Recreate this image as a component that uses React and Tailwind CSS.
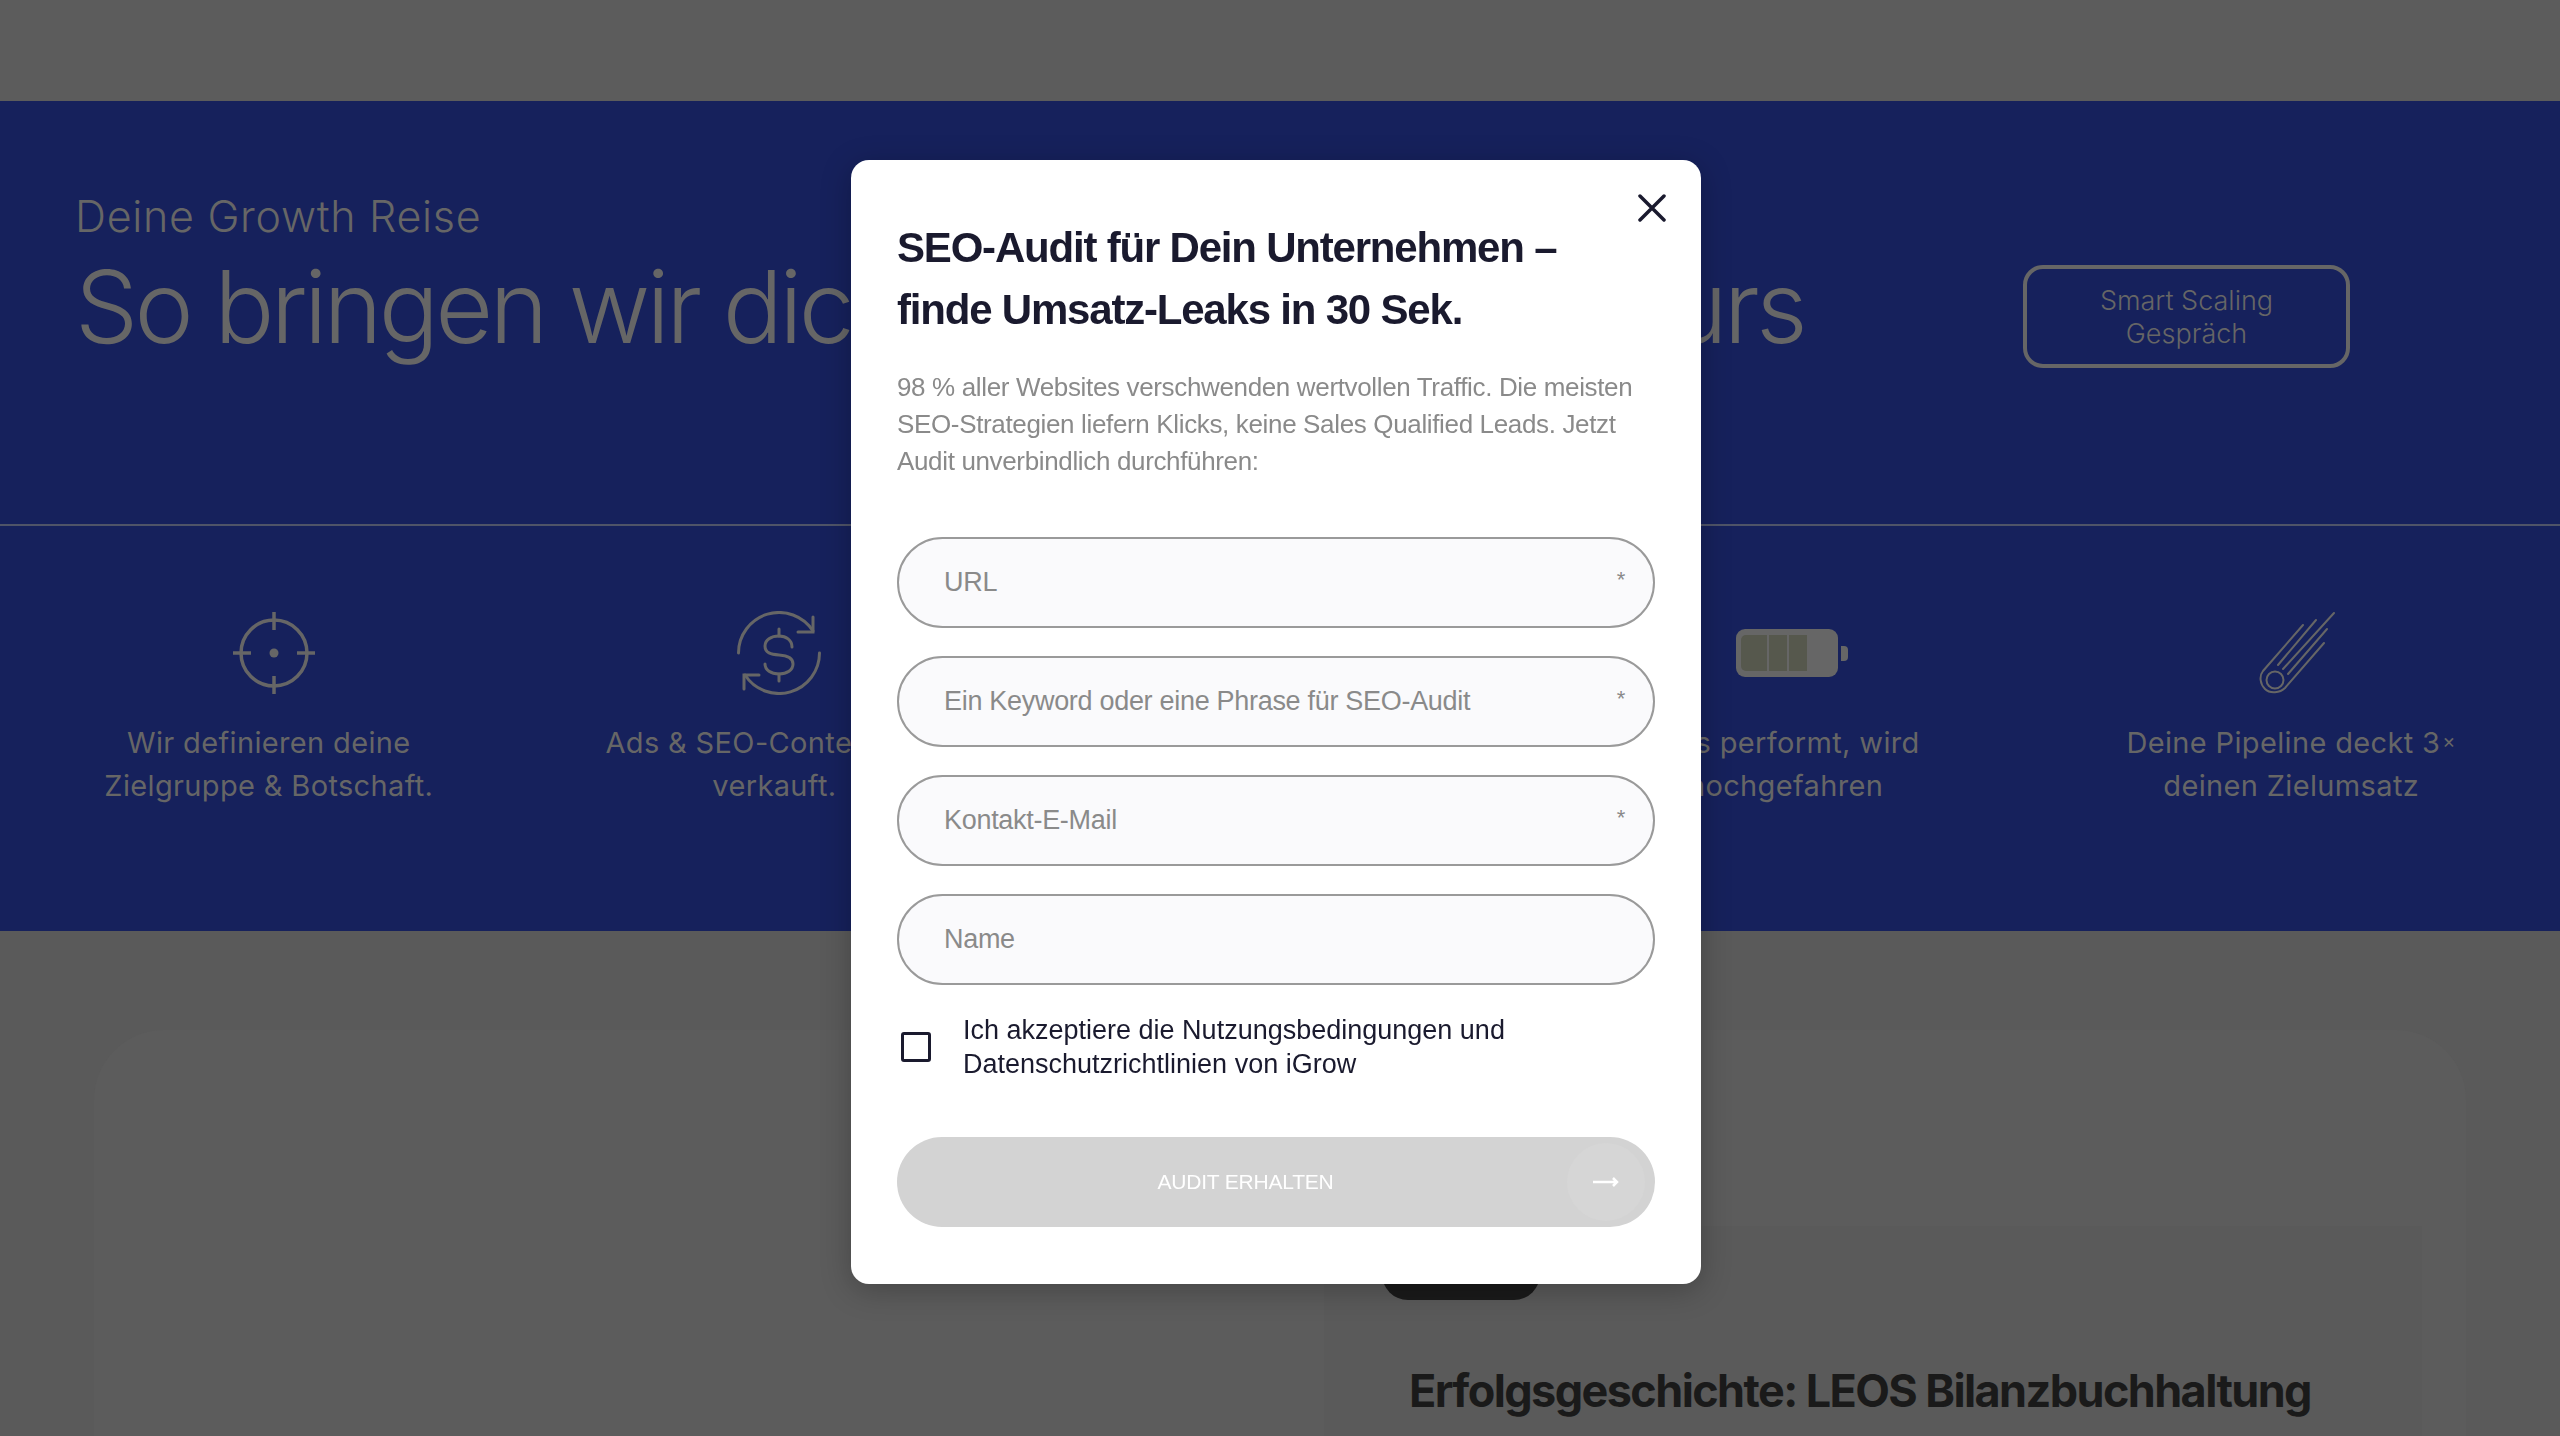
function TargetIcon() {
  return (
    <svg width="84" height="84" viewBox="0 0 84 84" fill="none" stroke="#666" strokeWidth="3.500">
      <circle cx="42" cy="42" r="33" />
      <path d="M42 1V19M42 65V83M1 42H19M65 42H83" />
      <circle cx="42" cy="42" r="4.500" fill="#666" stroke="none" />
    </svg>
  );
}

function DollarIcon() {
  return (
    <svg width="84" height="84" viewBox="0 0 84 84" fill="none" stroke="#666" strokeWidth="3" strokeLinecap="round">
      <path d="M1.500 42A40.500 40.500 0 0 1 76 20" />
      <path d="M76 6V21H61" />
      <path d="M82.500 42A40.500 40.500 0 0 1 8 64" />
      <path d="M7 78V64H22" />
      <path d="M55 36C55 29 49 25 42 25C34 25 28 29 28 35C28 42 34 43.500 42 44C50 44.500 56 47 56 53C56 59 50 63 42 63C34 63 28 59 28 53" />
      <path d="M42 18V25M42 63V70" />
    </svg>
  );
}

function BatteryIcon() {
  return (
    <div className="flex items-center gap-[3px]">
      <div className="flex h-[48px] w-[102px] gap-[2px] rounded-[9px] bg-[#666] py-[6px] pl-[5px] pr-[31px]">
        <div className="w-[26px] rounded-l-[5px] bg-[#56584d]" />
        <div className="w-[18px] bg-[#56584d]" />
        <div className="w-[18px] bg-[#56584d]" />
      </div>
      <div className="h-[15px] w-[7px] rounded-r-[4px] bg-[#666]" />
    </div>
  );
}

function CometIcon() {
  return (
    <svg width="78" height="84" viewBox="0 0 78 84" fill="none" stroke="#666" strokeWidth="2" strokeLinecap="round">
      <circle cx="17" cy="69" r="8.500" />
      <path d="M45 14L5 60C1 65 2 73 7 78C12 83 22 82 27 77L66 32" />
      <path d="M58 9L20 54M76 2L25 58M69 18L30 63" />
    </svg>
  );
}

function Step({ icon, lines, iconShift }) {
  return (
    <div className="flex flex-col items-center text-center">
      <div className={"flex h-[84px] items-center " + iconShift}>{icon}</div>
      <p className="mt-[26px] text-[29px] leading-[43px] tracking-[0.35px] text-[#666]">
        {lines[0]}
        <br />
        {lines[1]}
      </p>
    </div>
  );
}

function Field({ label, required }) {
  return (
    <label className="relative flex h-[91px] items-center rounded-full border-2 border-[#9a9a9a] bg-[#fafafc] pl-[45px] text-[27px] tracking-[-0.3px] text-[#8a8a8a]">
      {label}
      {required && <span className="absolute right-[28px] top-[24px] text-[22px]">*</span>}
    </label>
  );
}

export default function App() {
  return (
    <div className="relative h-[1436px] overflow-hidden bg-[#5a5a5a] font-['Inter',sans-serif]">
      <div className="h-[101px] bg-[#5c5c5c]" />

      <section className="h-[830px] bg-[#16215c]">
        <div className="flex h-[425px] items-start justify-between border-b-2 border-[#4f5468] pl-[75px] pr-[210px] pt-[87px]">
          <div>
            <p className="text-[43px] font-light leading-[56px] tracking-[0.7px] text-[#666]">Deine Growth Reise</p>
            <h1 className="mt-[7px] whitespace-nowrap text-[100px] font-light leading-[112px] tracking-[-3.75px] text-[#666]">
              So bringen wir dich <span className="ml-[21px]">auf Wachstumskurs</span>
            </h1>
          </div>
          <button className="mt-[77px] h-[103px] w-[327px] rounded-[20px] border-4 border-[#666] text-[27px] leading-[33px] font-light text-[#666]">
            Smart Scaling
            <br />
            Gespräch
          </button>
        </div>
        <div className="grid grid-cols-5 px-[16px] pt-[85px]">
          <Step icon={<TargetIcon />} iconShift="translate-x-[5px]" lines={["Wir definieren deine", "Zielgruppe & Botschaft."]} />
          <Step icon={<DollarIcon />} iconShift="translate-x-[5px]" lines={["Ads & SEO-Content, der", "verkauft."]} />
          <div />
          <Step icon={<BatteryIcon />} iconShift="translate-x-[6px]" lines={["Was performt, wird", "hochgefahren"]} />
          <Step
            icon={<CometIcon />}
            iconShift="translate-x-[6px]"
            lines={[
              <>
                Deine Pipeline deckt 3<span className="ml-[2px] align-[5px] text-[20px] leading-none">×</span>
              </>,
              "deinen Zielumsatz",
            ]}
          />
        </div>
      </section>

      <section className="px-[94px] pt-[99px]">
        <div className="flex h-[600px] justify-end rounded-t-[70px] bg-[#5c5c5c] pr-[44px] pt-[196px]">
          <div className="w-[1098px] bg-[#5a5a5a] pl-[85px] pt-[13px]">
            <div className="-ml-[27px] h-[61px] w-[158px] rounded-[26px] bg-[#1a1a1a]" />
            <h2 className="mt-[63px] whitespace-nowrap text-[45px] font-bold leading-[56px] tracking-[-1.6px] text-[#1a1a1a]">
              Erfolgsgeschichte: LEOS Bilanzbuchhaltung
            </h2>
          </div>
        </div>
      </section>

      <div className="fixed inset-0 flex justify-center pr-[8px] pt-[160px]">
        <div className="relative h-[1124px] w-[850px] rounded-[18px] bg-white px-[46px] pt-[57px] font-['Liberation_Sans',sans-serif] shadow-[0_6px_30px_rgba(0,0,0,0.25)]">
          <button className="absolute right-[35px] top-[34px] text-[#1a1a2e]" aria-label="Schließen">
            <svg width="28" height="28" viewBox="0 0 28 28" fill="none" stroke="currentColor" strokeWidth="3.500" strokeLinecap="round">
              <path d="M2 2L26 26M26 2L2 26" />
            </svg>
          </button>

          <h2 className="text-[42px] font-bold leading-[62px] tracking-[-1.2px] text-[#1a1a2e]">
            SEO-Audit für Dein Unternehmen –
            <br />
            finde Umsatz-Leaks in 30 Sek.
          </h2>
          <p className="mt-[28px] text-[26px] leading-[37px] tracking-[-0.35px] text-[#8a8a8a]">
            98 % aller Websites verschwenden wertvollen Traffic. Die meisten SEO-Strategien liefern Klicks, keine Sales Qualified Leads. Jetzt Audit unverbindlich durchführen:
          </p>

          <form className="mt-[57px] flex flex-col gap-[28px]">
            <Field label="URL" required />
            <Field label="Ein Keyword oder eine Phrase für SEO-Audit" required />
            <Field label="Kontakt-E-Mail" required />
            <Field label="Name" />
          </form>

          <div className="mt-[28px] flex items-center gap-[32px] pl-[4px]">
            <span className="h-[30px] w-[30px] shrink-0 rounded-[3px] border-[3px] border-[#1a1a2e]" />
            <p className="text-[27px] leading-[34px] text-[#1a1a2e]">
              Ich akzeptiere die Nutzungsbedingungen und
              <br />
              Datenschutzrichtlinien von iGrow
            </p>
          </div>

          <button className="mt-[56px] flex h-[90px] w-full items-center rounded-full bg-[#d3d3d3] pr-[10px] text-white">
            <span className="flex-1 pl-[27px] text-center text-[21px] tracking-[-0.2px]">AUDIT ERHALTEN</span>
            <span className="flex h-[78px] w-[78px] items-center justify-center rounded-full bg-[#d6d6d6]">
              <svg width="26" height="12" viewBox="0 0 26 12" fill="none" stroke="currentColor" strokeWidth="2.500">
                <path d="M0 6H24M20 2L24 6L20 10" />
              </svg>
            </span>
          </button>
        </div>
      </div>
    </div>
  );
}
